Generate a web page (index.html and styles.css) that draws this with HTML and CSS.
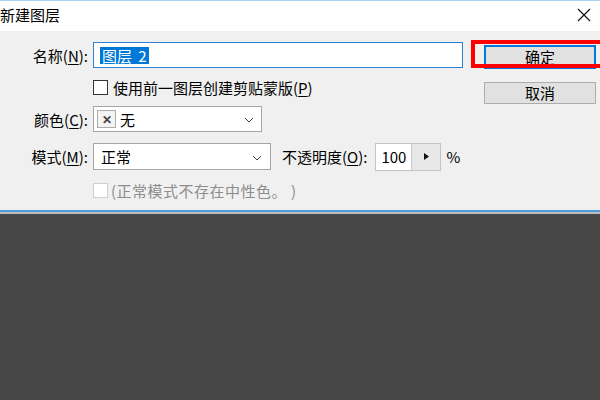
FILE: index.html
```html
<!DOCTYPE html>
<html>
<head>
<meta charset="utf-8">
<link rel="stylesheet" href="styles.css">
<title>新建图层</title>
</head>
<body>
<div class="win">
  <div class="titlebar">
    <span class="title">新建图层</span>
    <svg class="close" width="14" height="14" viewBox="0 0 14 14"><path d="M1 1L13 13M13 1L1 13" stroke="#111" stroke-width="1.2"/></svg>
  </div>
  <div class="body">
    <div class="form">
      <div class="row r-name">
        <label class="lbl">名称(<u>N</u>):</label>
        <div class="text-in"><span class="sel">图层 2</span></div>
      </div>
      <div class="row r-clip">
        <span class="lbl"></span>
        <span class="chk"></span><span class="chk-txt">使用前一图层创建剪贴蒙版(<u>P</u>)</span>
      </div>
      <div class="row r-color">
        <label class="lbl">颜色(<u>C</u>):</label>
        <div class="select sel-color">
          <span class="swatch">✕</span><span class="val">无</span>
          <svg class="chev" width="10" height="6" viewBox="0 0 10 6"><polyline points="1,1 5,5 9,1" fill="none" stroke="#444" stroke-width="1"/></svg>
        </div>
      </div>
      <div class="row r-mode">
        <label class="lbl">模式(<u>M</u>):</label>
        <div class="select sel-mode">
          <span class="val">正常</span>
          <svg class="chev" width="10" height="6" viewBox="0 0 10 6"><polyline points="1,1 5,5 9,1" fill="none" stroke="#444" stroke-width="1"/></svg>
        </div>
        <label class="op-lbl">不透明度(<u>O</u>):</label>
        <div class="num">
          <span class="num-val">100</span>
          <span class="num-btn"><svg width="5" height="7" viewBox="0 0 5 7"><path d="M0 0L5 3.5L0 7Z" fill="#111"/></svg></span>
        </div>
        <span class="pct">%</span>
      </div>
      <div class="row r-neutral">
        <span class="lbl"></span>
        <span class="chk off"></span><span class="chk-txt off">(正常模式不存在中性色。 )</span>
      </div>
    </div>
    <div class="btns">
      <div class="btn ok">确定</div>
      <div class="btn">取消</div>
    </div>
    <div class="mark"></div>
  </div>
  <div class="foot"></div>
</div>
</body>
</html>
```

FILE: styles.css
```css
html,body{margin:0;padding:0;}
body{background:#474747;font:15px/1.4 "Noto Sans CJK SC","Microsoft YaHei",sans-serif;color:#000;width:600px;height:400px;overflow:hidden;}
u{text-decoration:underline;text-underline-offset:2px;}

.win{border-top:1px solid #a9d1f2;}
.titlebar{height:30px;background:#fff;display:flex;align-items:center;justify-content:space-between;}
.title{font-size:15px;color:#000;margin-top:-3px;}
.close{margin-right:9px;margin-top:-2px;}

.body{position:relative;background:#f0f0f0;height:179px;display:flex;}
.form{width:470px;padding-top:11px;}
.row{display:flex;align-items:center;}
.lbl{width:88px;padding-right:5px;text-align:right;white-space:nowrap;}

.r-name{height:26px;}
.text-in{width:362px;height:24px;border:1px solid #2f7fd5;background:#fff;display:flex;align-items:center;padding-left:6px;}
.sel{display:block;height:17px;background:#0078d7;color:#fff;line-height:17px;padding:0 2px;word-spacing:3px;white-space:pre;}

.r-clip{height:22px;margin-top:8px;}
.chk{width:13px;height:13px;border:1px solid #333;background:#fff;margin-right:5px;}
.chk.off{border-color:#cfcfcf;margin-right:3px;}
.chk-txt.off{color:#8d8d8d;letter-spacing:0.5px;}

.select{position:relative;height:24px;border:1px solid #a6a6a6;background:#fff;display:flex;align-items:center;}
.chev{position:absolute;top:10px;}
.r-color{height:26px;margin-top:8px;}
.sel-color{width:167px;}
.sel-color .chev{right:7px;}
.swatch{width:17px;height:16px;margin-left:3px;border:1px solid #acacac;background:#f4f4f4;color:#444;font-size:12px;font-weight:700;line-height:16px;text-align:center;}
.sel-color .val{margin-left:4px;}

.r-mode{height:27px;margin-top:11px;}
.sel-mode{width:176px;height:25px;}
.sel-mode .val{margin-left:7px;}
.sel-mode .chev{right:8px;top:11px;}
.op-lbl{margin-left:11px;white-space:nowrap;}
.num{display:flex;height:26px;border:1px solid #c3c3c3;margin-left:8px;}
.num-val{width:35px;background:#fff;text-align:center;line-height:26px;}
.num-btn{width:28px;background:#e8e8e8;border-left:1px solid #c9c9c9;display:flex;align-items:center;justify-content:center;}
.pct{margin-left:5px;}

.r-neutral{height:22px;margin-top:9px;}

.btns{display:flex;flex-direction:column;padding-top:14px;margin-left:14px;}
.btn{width:110px;height:20px;border:1px solid #adadad;background:#e1e1e1;text-align:center;line-height:20px;}
.btn.ok{border:2px solid #0078d7;width:108px;height:20px;line-height:19px;margin-bottom:13px;}

.mark{position:absolute;left:471px;top:9px;width:129px;height:28px;border:4px solid #f00;border-right:0;box-sizing:border-box;}

.foot{height:2px;background:#4d9ddb;border-bottom:2px solid #bdbdbd;}
```
